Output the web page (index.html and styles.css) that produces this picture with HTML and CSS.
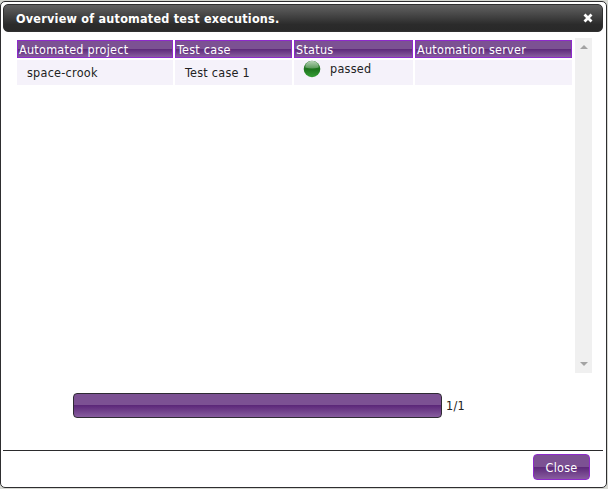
FILE: index.html
```
<!DOCTYPE html>
<html lang="en">
<head>
<meta charset="utf-8">
<title>Overview of automated test executions.</title>
<link rel="stylesheet" href="styles.css">
</head>
<body>
<section class="dialog">
  <header class="titlebar">
    <h1>Overview of automated test executions.</h1>
    <svg class="close-icon" width="10" height="10" viewBox="0 0 10 10"><path d="M1.5 1.5 8.5 8.5M8.5 1.5 1.5 8.5"/></svg>
  </header>
  <main class="content">
    <div class="grid">
      <div class="head">Automated project</div>
      <div class="head">Test case</div>
      <div class="head">Status</div>
      <div class="head">Automation server</div>
      <div class="cell">space-crook</div>
      <div class="cell">Test case 1</div>
      <div class="cell status"><svg width="18" height="18" viewBox="0 0 18 18">
        <defs>
          <linearGradient id="ball" x1="0" y1="0" x2="0" y2="1"><stop offset="0" stop-color="#4b924b"/><stop offset=".5" stop-color="#1d731d"/><stop offset="1" stop-color="#36a036"/></linearGradient>
          <linearGradient id="gloss" x1="0" y1="0" x2="0" y2="1"><stop offset="0" stop-color="#b4d0b4"/><stop offset="1" stop-color="#589858"/></linearGradient>
        </defs>
        <circle cx="9" cy="9" r="8.3" fill="url(#ball)"/>
        <path d="M2.3 7.5C2.3 3.5 5.3 1.1 9 1.1s6.700 2.400 6.700 6.400Q9 9.500 2.300 7.500Z" fill="url(#gloss)"/>
      </svg><span>passed</span></div>
      <div class="cell"></div>
    </div>
    <div class="scrollbar">
      <svg width="8" height="4" viewBox="0 0 8 4"><path d="M0 4 4 0 8 4Z"/></svg>
      <svg width="8" height="4" viewBox="0 0 8 4"><path d="M0 0 4 4 8 0Z"/></svg>
    </div>
  </main>
  <div class="progress"><div class="bar"></div><span>1/1</span></div>
  <footer><button class="close">Close</button></footer>
</section>
</body>
</html>
```
FILE: styles.css
```
* { box-sizing: border-box; }
body {
  margin: 0;
  width: 608px;
  height: 489px;
  overflow: hidden;
  padding-top: 1px;
  background: #d6d8d2;
  color: #222;
  font: 12.5px/16px "DejaVu Sans Condensed", "DejaVu Sans", sans-serif;
  font-stretch: condensed;
  letter-spacing: .26px;
}
.dialog {
  width: 607px;
  height: 487px;
  padding: 2px;
  border: 1px solid #2e2e30;
  border-radius: 5px;
  background: #fff;
}
.titlebar {
  display: flex;
  align-items: center;
  justify-content: space-between;
  width: 600px;
  height: 28px;
  padding: 0 10px 0 12px;
  border: 1px solid #303030;
  border-radius: 5px;
  background: linear-gradient(#626262 0%, #2b2b2b 75%, #292929 100%);
  color: #fff;
}
h1 { margin: 0; padding-top: 1px; font-size: 12.5px; line-height: 16px; letter-spacing: .23px; }
.close-icon { width: 10px; height: 10px; margin-right: -1px; }
.close-icon path { stroke: #fff; stroke-width: 2.800; fill: none; }
.content {
  display: flex;
  justify-content: space-between;
  height: 335px;
  margin: 6px 12px 0 14px;
}
.grid {
  display: grid;
  grid-template-columns: 156px 117px 119px 157px;
  grid-template-rows: 18px 25px;
  gap: 2px;
  padding-top: 2px;
  align-content: start;
}
.head, .close, .bar {
  background: linear-gradient(#7c5193 0, #7c5193 49%, #5c2879 50%, #885d9f 100%);
}
.head {
  padding-left: 1px;
  border: 1px solid #8e2acb;
  color: #fff;
  line-height: 18px;
  white-space: nowrap;
}
.cell { padding: 5px 10px; background: #f5f2fa; }
.status { display: flex; gap: 9px; padding: 0 0 0 9px; }
.status span { line-height: 18px; }
.scrollbar {
  display: flex;
  flex-direction: column;
  align-items: center;
  justify-content: space-between;
  width: 17px;
  padding: 7px 0;
  background: #f0f0f0;
}
.scrollbar path { fill: #a3a3a3; }
.progress {
  display: flex;
  align-items: center;
  gap: 4px;
  height: 25px;
  margin: 20px 0 0 70px;
}
.bar {
  width: 369px;
  height: 25px;
  border: 1px solid #2f2b34;
  border-radius: 4px;
}
footer {
  display: flex;
  justify-content: flex-end;
  width: 600px;
  margin-top: 32px;
  padding: 3px 13px 0 0;
  border-top: 1px solid #2b2b2d;
}
.close {
  width: 57px;
  height: 26px;
  padding: 1px 0 0;
  border: 1px solid #8e2acb;
  border-radius: 4px;
  color: #fff;
  font: inherit;
  letter-spacing: inherit;
}
```
